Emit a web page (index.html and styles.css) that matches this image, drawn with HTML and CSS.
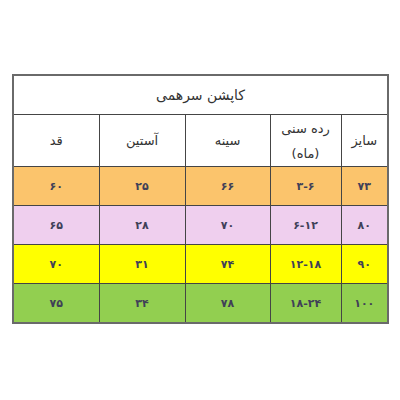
FILE: index.html
```html
<!DOCTYPE html>
<html lang="fa">
<head>
<meta charset="utf-8">
<link rel="stylesheet" href="styles.css">
</head>
<body>
<div class="wrap">
<table class="size-table" dir="rtl">
  <colgroup>
    <col class="c-size"><col class="c-age"><col class="c-chest"><col class="c-sleeve"><col class="c-height">
  </colgroup>
  <tr class="title-row"><td colspan="5">کاپشن سرهمی</td></tr>
  <tr class="head-row">
    <td>سایز</td>
    <td>رده سنی<br>(ماه)</td>
    <td>سینه</td>
    <td>آستین</td>
    <td>قد</td>
  </tr>
  <tr class="r-orange"><td>۷۳</td><td>۳-۶</td><td>۶۶</td><td>۲۵</td><td>۶۰</td></tr>
  <tr class="r-pink"><td>۸۰</td><td>۶-۱۲</td><td>۷۰</td><td>۲۸</td><td>۶۵</td></tr>
  <tr class="r-yellow"><td>۹۰</td><td>۱۲-۱۸</td><td>۷۴</td><td>۳۱</td><td>۷۰</td></tr>
  <tr class="r-green"><td>۱۰۰</td><td>۱۸-۲۴</td><td>۷۸</td><td>۳۴</td><td>۷۵</td></tr>
</table>
</div>
</body>
</html>
```
FILE: styles.css
```css
html, body {
  margin: 0;
  padding: 0;
  background: #ffffff;
}
.wrap {
  padding: 74px 0 0 12px;
}
.size-table {
  width: 376px;
  border-collapse: collapse;
  table-layout: fixed;
  border: 2px solid #6a6a6a;
  font-family: "DejaVu Sans", sans-serif;
  color: #333333;
}
.size-table td {
  border: 1.5px solid #454545;
  text-align: center;
  vertical-align: middle;
  padding: 0;
}
.c-size { width: 47px; }
.c-age { width: 71px; }
.c-chest { width: 85px; }
.c-sleeve { width: 86px; }
.c-height { width: 86px; }
.title-row td {
  height: 38px;
  font-size: 14px;
  background: #fff;
}
.head-row td {
  height: 51px;
  font-size: 13px;
  line-height: 25px;
  background: #fff;
}
.r-orange td, .r-pink td, .r-yellow td, .r-green td {
  height: 38px;
  font-size: 11px;
  font-weight: bold;
  color: #404058;
}
.r-orange td { background: #fbc46c; }
.r-pink td { background: #efcfee; }
.r-yellow td { background: #ffff00; }
.r-green td { background: #92cf50; }
```
